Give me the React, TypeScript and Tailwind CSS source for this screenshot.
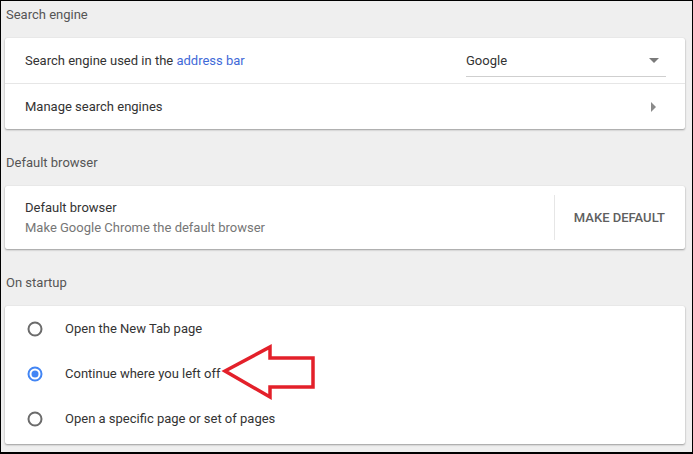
import React from "react";

const font = { fontFamily: "Roboto, 'Liberation Sans', sans-serif" };

function Header({ children, first }: { children: React.ReactNode; first?: boolean }) {
  return (
    <div
      className={`${first ? "h-[37px]" : "h-[57px]"} flex items-end pb-[13px] pl-[1px] text-[13px] leading-[20px] font-normal text-[#555]`}
    >
      {children}
    </div>
  );
}

function Radio({ checked }: { checked?: boolean }) {
  return (
    <svg width="16" height="16" viewBox="0 0 16 16" className="shrink-0">
      <circle
        cx="8"
        cy="8"
        r="6.5"
        fill="none"
        stroke={checked ? "#4285f4" : "#6b6b6b"}
        strokeWidth="2"
      />
      {checked && <circle cx="8" cy="8" r="3.5" fill="#4285f4" />}
    </svg>
  );
}

export default function App() {
  return (
    <div
      style={font}
      className="w-[693px] h-[454px] overflow-hidden border-l border-t border-r border-b-2 border-black bg-[#efefef] pl-[4px] pr-[7px]"
    >
      <Header first>Search engine</Header>
      <div className="bg-white rounded-[2px] shadow-[0_1px_2px_0_rgba(0,0,0,0.35),0_0_1px_0_rgba(0,0,0,0.12)]">
        <div className="h-[45px] flex items-center pl-[20px] pr-[19px] text-[13px] text-[#333]">
          <span className="flex-1">
            Search engine used in the <span className="text-[#3f6ad8]">address bar</span>
          </span>
          <div className="w-[200px] h-[26px] flex items-center justify-between border-b border-[#cfcfcf] mt-[6px] pb-[4px]">
            <span className="text-[13px] text-[#333]">Google</span>
            <svg width="10" height="6" viewBox="0 0 10 6" className="mr-[7px]">
              <path d="M0 0 L10 0 L5 5 Z" fill="#7a7a7a" />
            </svg>
          </div>
        </div>
        <div className="h-px bg-[#e6e6e6]" />
        <div className="h-[45px] flex items-center pl-[20px] pr-[29px] text-[13px] text-[#333]">
          <span className="flex-1">Manage search engines</span>
          <svg width="5" height="10" viewBox="0 0 5 10">
            <path d="M0 0 L5 5 L0 10 Z" fill="#8a8a8a" />
          </svg>
        </div>
      </div>

      <Header>Default browser</Header>
      <div className="h-[63px] bg-white rounded-[2px] shadow-[0_1px_2px_0_rgba(0,0,0,0.35),0_0_1px_0_rgba(0,0,0,0.12)] flex items-center">
        <div className="flex-1 pl-[20px] text-[13px] leading-[20px]">
          <div className="text-[#333]">Default browser</div>
          <div className="text-[#767676]">Make Google Chrome the default browser</div>
        </div>
        <div className="w-px h-[45px] bg-[#e6e6e6]" />
        <div className="w-[130px] flex justify-end pr-[20px] text-[13px] font-medium text-[#5f5f5f]">
          MAKE DEFAULT
        </div>
      </div>

      <Header>On startup</Header>
      <div className="relative bg-white rounded-[2px] shadow-[0_1px_2px_0_rgba(0,0,0,0.35),0_0_1px_0_rgba(0,0,0,0.12)] pt-0 pb-[3px]">
        {[
          { label: "Open the New Tab page", checked: false },
          { label: "Continue where you left off", checked: true },
          { label: "Open a specific page or set of pages", checked: false },
        ].map((r) => (
          <div key={r.label} className="h-[45px] flex items-center pl-[22px] text-[13px] text-[#333]">
            <Radio checked={r.checked} />
            <span className="ml-[22px]">{r.label}</span>
          </div>
        ))}
        <svg
          width="100"
          height="66"
          viewBox="0 0 100 66"
          className="absolute left-[215px] top-[35px]"
        >
          <path
            d="M5 30 L50 6 L50 17 L93 17 L93 46 L50 46 L50 56 Z"
            fill="none"
            stroke="#e3202a"
            strokeWidth="3.5"
            strokeLinejoin="miter"
          />
        </svg>
      </div>
    </div>
  );
}
